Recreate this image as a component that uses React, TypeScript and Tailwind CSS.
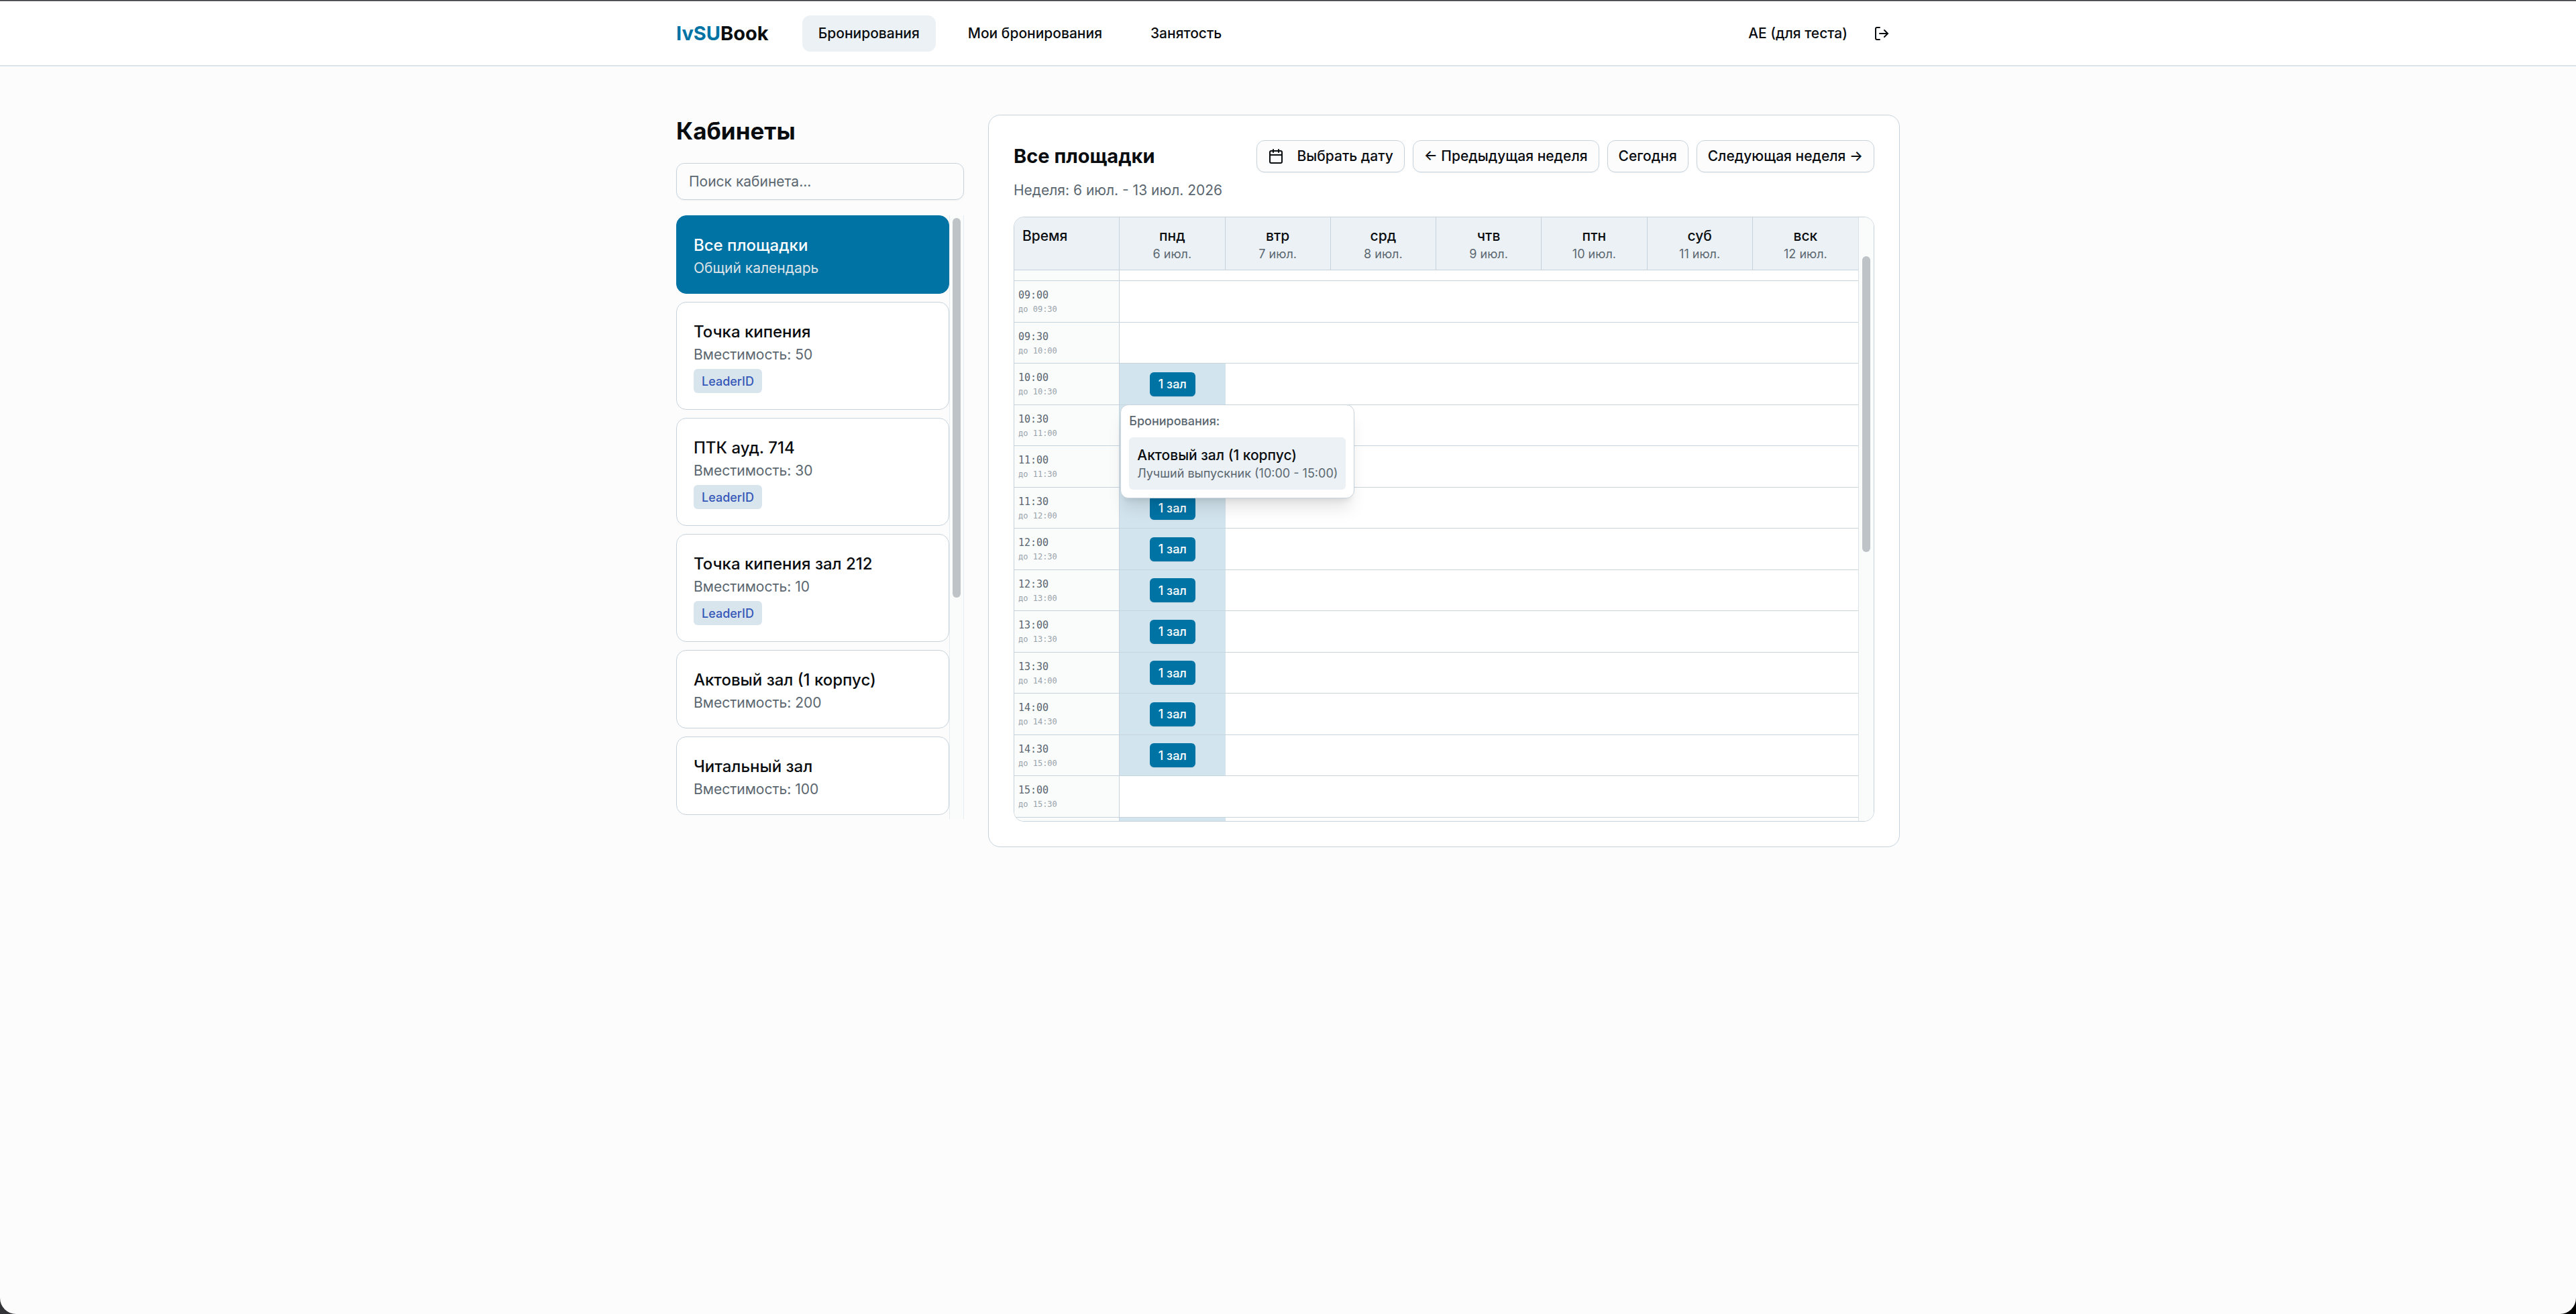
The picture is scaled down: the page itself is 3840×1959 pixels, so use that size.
import { useState } from "react";
import { Calendar, LogOut } from "lucide-react";

const rooms = [
  { name: "Все площадки", info: "Общий календарь", leader: false },
  { name: "Точка кипения", info: "Вместимость: 50", leader: true },
  { name: "ПТК ауд. 714", info: "Вместимость: 30", leader: true },
  { name: "Точка кипения зал 212", info: "Вместимость: 10", leader: true },
  { name: "Актовый зал (1 корпус)", info: "Вместимость: 200", leader: false },
  { name: "Читальный зал", info: "Вместимость: 100", leader: false },
];

const days = [
  { name: "пнд", date: "6 июл." },
  { name: "втр", date: "7 июл." },
  { name: "срд", date: "8 июл." },
  { name: "чтв", date: "9 июл." },
  { name: "птн", date: "10 июл." },
  { name: "суб", date: "11 июл." },
  { name: "вск", date: "12 июл." },
];

const slots = [
  "09:00", "09:30", "10:00", "10:30", "11:00", "11:30", "12:00",
  "12:30", "13:00", "13:30", "14:00", "14:30", "15:00",
];

// slot whose popover is open, and the slots that it fully covers
const openSlot = "10:00";
const coveredSlots = ["10:30", "11:00"];

const isBooked = (time: string, day: number) => day === 0 && time >= "10:00" && time < "15:00";

function NavLink({ label, active = false }: { label: string; active?: boolean }) {
  return (
    <a
      href="#"
      className={`flex h-[54px] items-center rounded-[12px] px-6 text-[21px] font-medium ${active ? "bg-[#ebf1f5]" : ""}`}
    >
      {label}
    </a>
  );
}

function Header() {
  return (
    <header className="border-b-2 border-[#dbe3ea] bg-white">
      <div className="mx-auto flex h-[95px] max-w-[1824px] items-center">
        <a href="#" className="mr-[50px] text-[29px] font-bold">
          <span className="text-[#0073a5]">IvSU</span>Book
        </a>
        <nav className="flex gap-6">
          <NavLink label="Бронирования" active />
          <NavLink label="Мои бронирования" />
          <NavLink label="Занятость" />
        </nav>
        <div className="ml-auto flex items-center gap-6">
          <span className="text-[21px] font-medium">AE (для теста)</span>
          <button aria-label="Выйти" className="flex h-12 items-center px-[15px]">
            <LogOut size={24} />
          </button>
        </div>
      </div>
    </header>
  );
}

function RoomList() {
  const [selected, setSelected] = useState(0);
  const [query, setQuery] = useState("");

  return (
    <aside>
      <h1 className="mb-6 text-[35px] font-bold leading-[48px]">Кабинеты</h1>
      <input
        type="text"
        aria-label="Поиск кабинета"
        placeholder="Поиск кабинета..."
        value={query}
        onChange={(e) => setQuery(e.target.value)}
        className="mb-[23px] h-[55px] w-full rounded-[12px] border border-[#c6d3dc] px-[18px] text-[21px] shadow-xs placeholder:text-[#5b6770]"
      />
      <div className="flex h-[900px] overflow-hidden">
        <div className="flex min-w-0 flex-1 flex-col gap-3">
          {rooms.map((room, idx) => (
            <button
              key={room.name}
              onClick={() => setSelected(idx)}
              className={`flex flex-col items-start rounded-[15px] border px-[25px] py-6 text-left ${
                selected === idx ? "border-[#0073a5] bg-[#0073a5] text-white" : "border-[#c6d3dc] bg-white"
              }`}
            >
              <span className="text-[24px] font-medium leading-[40px]">{room.name}</span>
              <span className={`text-[21px] leading-[27px] ${selected === idx ? "text-[#dde3e7]" : "text-[#5b6770]"}`}>
                {room.info}
              </span>
              {room.leader && (
                <span className="mt-2 flex h-9 items-center rounded-[6px] bg-[#d9e5ed] px-3 text-[18px] font-medium text-[#3457b8]">
                  LeaderID
                </span>
              )}
            </button>
          ))}
        </div>
        <div className="flex w-[22px] justify-center border-x border-[#e6ecf0] bg-[#fafbfb] pt-1">
          <div className="h-[566px] w-3 rounded-full bg-[#bdc3c7]" />
        </div>
      </div>
    </aside>
  );
}

function ToolbarButton({ children }: { children: React.ReactNode }) {
  return (
    <button className="flex h-12 items-center rounded-[12px] border border-[#c6d3dc] bg-[#fcfcfd] px-4 text-[21px] font-medium shadow-xs">
      {children}
    </button>
  );
}

function BookingPopover() {
  return (
    <div className="absolute left-px top-full z-10 w-max rounded-[12px] border border-[#c6d3dc] bg-white p-3 text-left shadow-xl">
      <div className="mb-3 text-[18px] font-medium leading-[24px] text-[#5b6770]">Бронирования:</div>
      <div className="rounded-[6px] bg-[#ebf1f5] p-3">
        <div className="text-[21px] font-medium leading-[30px]">Актовый зал (1 корпус)</div>
        <div className="text-[18px] leading-[24px] text-[#5b6770]">Лучший выпускник (10:00 - 15:00)</div>
      </div>
    </div>
  );
}

function TimeLabel({ from, to }: { from: string; to: string }) {
  return (
    <div className="font-['DejaVu_Sans_Mono',monospace]">
      <div className="text-[15px] leading-[23px] text-[#5b6770]">{from}</div>
      <div className="text-[12px] leading-[18px] text-[#98a2aa]">до {to}</div>
    </div>
  );
}

function WeekTable() {
  return (
    <table className="w-full table-fixed border-separate border-spacing-0">
      <thead>
        <tr className="h-[79px]">
          <th className="border-b border-r border-[#c6d3dc] bg-[#ebf1f5] px-3 pt-3 text-left align-top text-[21px] font-medium leading-[31px]">
            Время
          </th>
          {days.map((day) => (
            <th key={day.name} className="border-b border-r border-[#c6d3dc] bg-[#ebf1f5] p-0 pt-3 align-top font-medium last:border-r-0">
              <div className="text-[21px] leading-[31px]">{day.name}</div>
              <div className="text-[18px] font-normal leading-[24px] text-[#5b6770]">{day.date}</div>
            </th>
          ))}
        </tr>
      </thead>
      <tbody>
        {/* tail of the 08:30 row, the rest is scrolled under the header */}
        <tr className="h-4">
          <td className="border-b border-r border-[#c6d3dc] bg-[#fafbfb] p-0" />
          <td colSpan={7} className="border-b border-[#c6d3dc] p-0" />
        </tr>
        {slots.map((time, idx) => (
          <tr key={time} className="h-[61px] even:h-[62px]">
            <td className="border-b border-r border-[#c6d3dc] bg-[#fafbfb] py-0 pl-[6px] pr-0">
              <TimeLabel from={time} to={slots[idx + 1] ?? "15:30"} />
            </td>
            {days.map((day, dayIdx) => {
              const booked = isBooked(time, dayIdx);
              return (
                <td
                  key={day.name}
                  className={`relative border-b p-0 ${booked ? "border-[#c6d5de] bg-[#d2e4ee]" : "border-[#c9d5dd]"}`}
                >
                  {booked && !coveredSlots.includes(time) && (
                    <button className="mx-auto flex h-9 items-center rounded-[6px] bg-[#0073a5] px-[13px] text-[18px] font-medium text-white shadow-xs">
                      1 зал
                    </button>
                  )}
                  {time === openSlot && dayIdx === 0 && <BookingPopover />}
                </td>
              );
            })}
          </tr>
        ))}
        {/* top edge of the 15:30 row */}
        <tr className="h-[6px]">
          <td className="border-r border-[#c6d3dc] bg-[#fafbfb] p-0" />
          <td className="bg-[#d2e4ee] p-0" />
          <td colSpan={6} className="p-0" />
        </tr>
      </tbody>
    </table>
  );
}

function Schedule() {
  return (
    <section className="rounded-[18px] border border-[#c6d3dc] bg-white p-[37px]">
      <div className="flex h-12 items-center justify-between">
        <h2 className="text-[29px] font-bold">Все площадки</h2>
        <div className="flex gap-3">
          <ToolbarButton>
            <Calendar size={24} className="mr-5" />
            Выбрать дату
          </ToolbarButton>
          <ToolbarButton>← Предыдущая неделя</ToolbarButton>
          <ToolbarButton>Сегодня</ToolbarButton>
          <ToolbarButton>Следующая неделя →</ToolbarButton>
        </div>
      </div>
      <p className="mb-6 mt-[11px] text-[21px] leading-[31px] text-[#5b6770]">Неделя: 6 июл. - 13 июл. 2026</p>
      <div className="flex h-[902px] overflow-hidden rounded-[15px] border border-[#c6d3dc]">
        <div className="min-w-0 flex-1">
          <WeekTable />
        </div>
        <div className="flex w-[23px] justify-center border-l border-[#dbe3ea] bg-[#fafbfb] pt-[58px]">
          <div className="h-[441px] w-3 rounded-full bg-[#bdc3c7]" />
        </div>
      </div>
    </section>
  );
}

export default function App() {
  return (
    <div className="min-h-screen bg-linear-to-r from-[#333438] to-black font-['Inter',sans-serif] text-[#0a0d10]">
      <div className="h-px bg-[#333438]" />
      <div className="min-h-[calc(100vh-1px)] overflow-hidden rounded-b-[24px] border-t border-[#85878a] bg-[#fcfcfd]">
        <Header />
        <main className="mx-auto grid max-w-[1824px] grid-cols-[429px_minmax(0,1fr)] items-start gap-9 pt-[72px]">
          <RoomList />
          <Schedule />
        </main>
      </div>
    </div>
  );
}
